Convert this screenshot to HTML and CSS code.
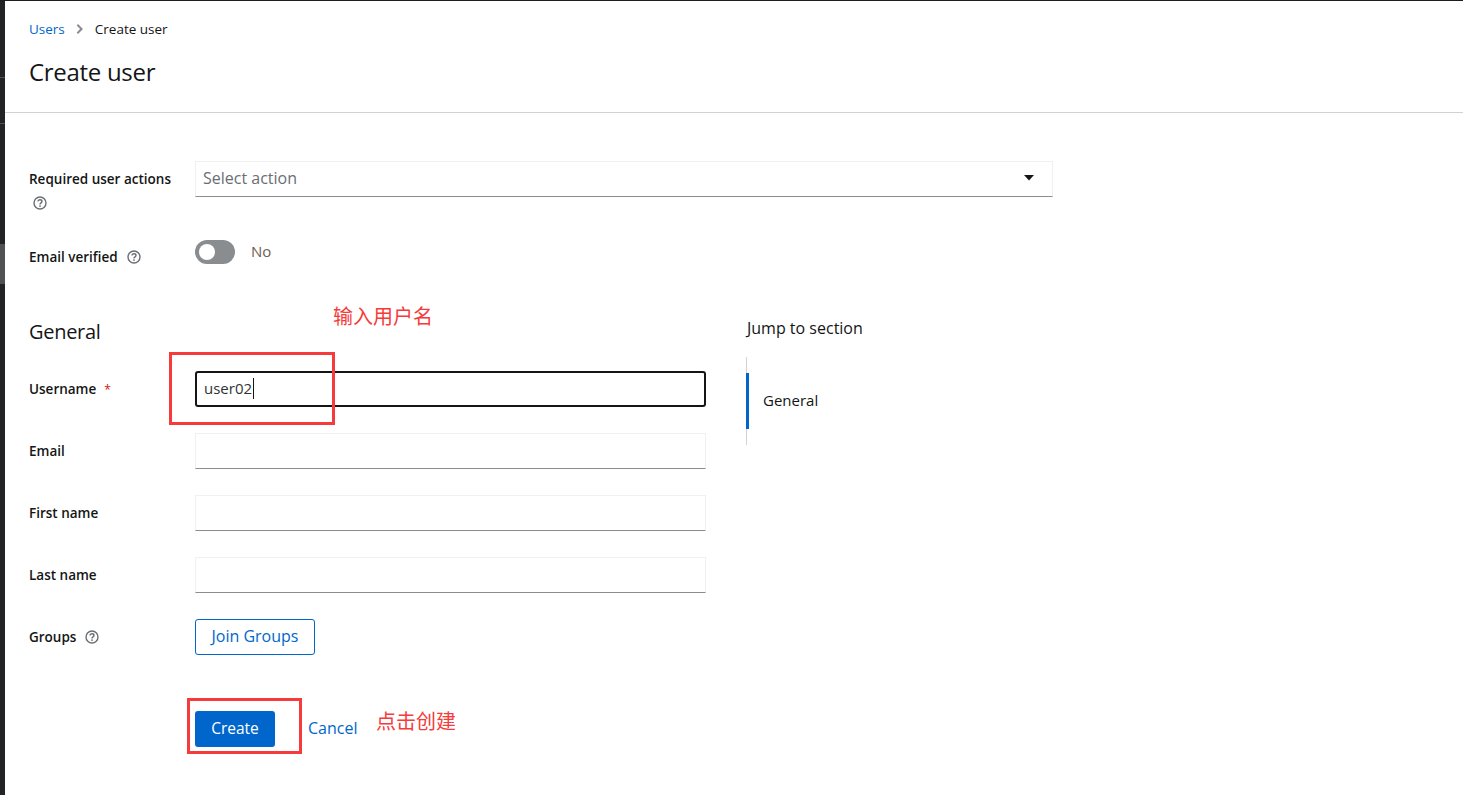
FILE: index.html
```html
<!doctype html>
<html lang="en">
  <head>
    <meta charset="UTF-8" />
    <meta name="viewport" content="width=device-width, initial-scale=1.0" />
    <title>Create user</title>
    <link rel="stylesheet" href="styles.css">
  </head>
  <body>
    <div class="app">
      <!-- Sliver of the dark side nav -->
      <div class="sidenav">
        <div class="sidenav-item sidenav-first"></div>
        <div class="sidenav-item sidenav-second"></div>
        <div class="sidenav-item sidenav-active"></div>
      </div>

      <main class="main">
        <header class="page-header">
          <nav class="breadcrumb">
            <a href="#" class="link">Users</a>
            <svg class="crumb-arrow" viewBox="0 0 8 12" width="8" height="12"><path d="M1.5 1 L6.5 6 L1.5 11 L0.2 9.4 L3.6 6 L0.2 2.6 Z" transform="translate(0.5 0)"/></svg>
            <span>Create user</span>
          </nav>
          <h1>Create user</h1>
        </header>

        <form class="form">
          <div class="row row-actions">
            <div class="label label-stack">
              <span>Required user actions</span>
              <svg class="help help-below" viewBox="0 0 14 14" width="14" height="14"><use href="#help-icon"/></svg>
            </div>
            <div class="select">
              <span>Select action</span>
              <svg class="caret-down" viewBox="0 0 10 6" width="10" height="6"><path d="M0 0 H10 L5 5.5 Z"/></svg>
            </div>
          </div>

          <div class="row row-verified">
            <div class="label">
              <span>Email verified</span>
              <svg class="help" viewBox="0 0 14 14" width="14" height="14"><use href="#help-icon"/></svg>
            </div>
            <div class="switch-wrap">
              <span class="switch"><span class="knob"></span></span>
              <span class="switch-text">No</span>
            </div>
          </div>

          <div class="columns">
            <section class="general">
              <h2>General</h2>
              <div class="row">
                <div class="label">Username <span class="required">*</span></div>
                <div class="field">
                  <input class="input input-focus" type="text" value="user02" />
                  <span class="text-caret"></span>
                </div>
              </div>
              <div class="row">
                <div class="label">Email</div>
                <input class="input" type="text" />
              </div>
              <div class="row">
                <div class="label">First name</div>
                <input class="input" type="text" />
              </div>
              <div class="row">
                <div class="label">Last name</div>
                <input class="input" type="text" />
              </div>
              <div class="row">
                <div class="label">
                  <span>Groups</span>
                  <svg class="help" viewBox="0 0 14 14" width="14" height="14"><use href="#help-icon"/></svg>
                </div>
                <button type="button" class="btn btn-outline">Join Groups</button>
              </div>
              <div class="row row-buttons">
                <button type="button" class="btn btn-primary">Create</button>
                <a href="#" class="link cancel">Cancel</a>
              </div>
            </section>

            <aside class="jump">
              <div class="jump-title">Jump to section</div>
              <div class="jump-list">
                <div class="jump-item">General</div>
              </div>
            </aside>
          </div>
        </form>
      </main>
    </div>

    <!-- Red notes drawn on top of the screenshot -->
    <div class="note-box note-box-user"></div>
    <div class="note-box note-box-create"></div>
    <div class="note note-user">输入用户名</div>
    <div class="note note-create">点击创建</div>

    <svg class="icon-defs" width="0" height="0">
      <symbol id="help-icon" viewBox="0 0 14 14">
        <circle cx="7" cy="7" r="6" fill="none" stroke="#6a6e73" stroke-width="1.4"/>
        <path d="M5 5.6 C5 4.4 5.9 3.8 7 3.8 C8.1 3.8 9 4.5 9 5.5 C9 6.9 7 6.9 7 8.4" fill="none" stroke="#6a6e73" stroke-width="1.4"/>
        <circle cx="7" cy="10.1" r="0.9" fill="#6a6e73"/>
      </symbol>
    </svg>
  </body>
</html>
```

FILE: styles.css
```css
* {
  box-sizing: border-box;
}
body {
  margin: 0;
  font-family: "Open Sans", "Noto Sans CJK SC", sans-serif;
  font-size: 14px;
  color: #151515;
  background: #fff;
}
.app {
  display: flex;
  height: 795px;
  border-top: 1px solid #1b1d21;
  overflow: hidden;
}
.icon-defs {
  position: absolute;
}

/* side nav */
.sidenav {
  width: 5px;
  flex: none;
  background: #212427;
}
.sidenav-first {
  height: 77px;
  border-bottom: 1px solid #4f5255;
}
.sidenav-second {
  height: 46px;
  border-bottom: 1px solid #4f5255;
}
.sidenav-active {
  height: 40px;
  margin-top: 120px;
  background: #4f5255;
}

.main {
  flex: 1;
  min-width: 0;
}
.page-header {
  height: 112px;
  padding: 19px 24px 0;
  border-bottom: 1px solid #d2d2d2;
}
.breadcrumb {
  display: flex;
  align-items: center;
  gap: 11px;
  height: 18px;
  font-size: 13.5px;
}
.crumb-arrow {
  fill: #8a8d90;
}
.link {
  color: #0066cc;
  text-decoration: none;
}
h1 {
  margin: 17px 0 0;
  font-size: 24px;
  line-height: 34px;
  font-weight: 400;
  letter-spacing: -0.3px;
}

.form {
  padding: 48px 24px 0;
}
.row {
  display: flex;
  align-items: center;
  height: 36px;
  margin-bottom: 26px;
}
.label {
  width: 166px;
  flex: none;
  display: flex;
  align-items: center;
  gap: 9px;
  font-size: 13.5px;
  font-weight: 600;
}
.label-stack {
  flex-wrap: wrap;
  gap: 8px 0;
  align-self: flex-start;
  padding-top: 9px;
}
.label-stack span {
  width: 100%;
}
.help {
  flex: none;
}
.help-below {
  margin-left: 4px;
}
.required {
  color: #c9190b;
  font-size: 12px;
  font-weight: 400;
  margin-left: -1px;
}

.select {
  width: 858px;
  height: 36px;
  display: flex;
  align-items: center;
  justify-content: space-between;
  padding: 0 18px 2px 7px;
  border: 1px solid #f0f0f0;
  border-bottom-color: #8a8d90;
  color: #6a6e73;
  font-size: 16px;
}
.caret-down {
  fill: #151515;
}
.row-actions {
  margin-bottom: 43px;
}
.row-verified {
  height: 25px;
  margin-bottom: 24px;
  align-items: flex-start;
}
.row-verified .label {
  padding-top: 8px;
}
.switch-wrap {
  display: flex;
  align-items: center;
  gap: 16px;
}
.switch {
  display: block;
  width: 40px;
  height: 24px;
  padding: 4px;
  border-radius: 12px;
  background: #8a8d90;
}
.knob {
  display: block;
  width: 16px;
  height: 16px;
  border-radius: 50%;
  background: #fff;
}
.switch-text {
  color: #6f5d52;
  font-size: 15px;
  padding-bottom: 2px;
}

.columns {
  display: flex;
  gap: 40px;
}
.general {
  width: 677px;
  flex: none;
}
h2 {
  margin: 0;
  padding-top: 30px;
  font-size: 20px;
  line-height: 26px;
  font-weight: 400;
  letter-spacing: -0.3px;
  height: 82px;
}
.input {
  display: block;
  width: 511px;
  height: 36px;
  padding: 0 8px;
  border: 1px solid #f0f0f0;
  border-bottom-color: #8a8d90;
  font: inherit;
  font-size: 15px;
  color: #151515;
  background: #fff;
  outline: none;
}
.input-focus {
  padding: 0 7px 2px;
  border: 2px solid #151515;
  border-radius: 3px;
  color: #2f3338;
}
.field {
  position: relative;
}
.text-caret {
  position: absolute;
  left: 58px;
  top: 7px;
  width: 1px;
  height: 21px;
  background: #151515;
}

.btn {
  height: 36px;
  padding: 0 0 2px;
  border-radius: 3px;
  font: inherit;
  cursor: pointer;
}
.btn-outline {
  width: 120px;
  border: 1px solid #0066cc;
  background: #fff;
  color: #0066cc;
  font-size: 16px;
}
.btn-primary {
  width: 80px;
  border: none;
  background: #0066cc;
  color: #fff;
  font-size: 15.5px;
}
.row-buttons {
  margin-top: 56px;
  padding-left: 166px;
}
.cancel {
  margin-left: 33px;
  font-size: 16px;
  padding-bottom: 2px;
}

.jump {
  padding: 29px 0 0 1px;
}
.jump-title {
  font-size: 16px;
  line-height: 20px;
}
.jump-list {
  margin: 19px 0 0 -1px;
  padding: 16px 0;
  border-left: 1px solid #d2d2d2;
}
.jump-item {
  height: 56px;
  margin-left: -1px;
  padding-left: 14px;
  font-size: 15px;
  line-height: 54px;
  border-left: 3px solid #0066cc;
}

/* annotations */
.note-box {
  position: absolute;
  border: 3px solid #f53b3b;
}
.note-box-user {
  left: 169px;
  top: 352px;
  width: 166px;
  height: 73px;
}
.note-box-create {
  left: 187px;
  top: 698px;
  width: 115px;
  height: 56px;
}
.note {
  position: absolute;
  font-family: "Noto Sans CJK SC", sans-serif;
  font-size: 20px;
  line-height: 26px;
  color: #f53b3b;
}
.note-user {
  left: 333px;
  top: 303px;
}
.note-create {
  left: 376px;
  top: 708px;
}
```
